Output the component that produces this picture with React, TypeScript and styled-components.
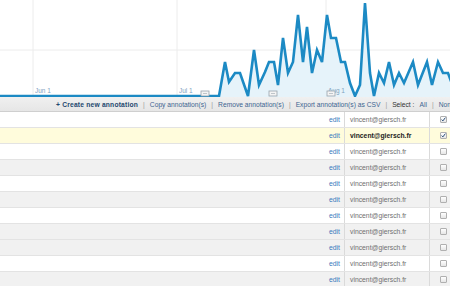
import styled, { createGlobalStyle } from 'styled-components'

const GlobalStyle = createGlobalStyle`
  html, body {
    margin: 0;
    padding: 0;
    background: #ffffff;
    overflow: hidden;
  }
`

const Page = styled.div`
  width: 450px;
  height: 286px;
  overflow: hidden;
  font-family: "Liberation Sans", Arial, sans-serif;
  background: #ffffff;
`

const Chart = styled.svg`
  display: block;
  width: 450px;
  height: 97px;
`

const Toolbar = styled.div`
  height: 15px;
  box-sizing: border-box;
  display: flex;
  align-items: center;
  gap: 5px;
  padding-left: 56px;
  background: linear-gradient(#f0f0f0, #e6e6e6);
  border-bottom: 1px solid #cfcfcf;
  white-space: nowrap;
  overflow: hidden;
  font-size: 6.7px;

  & > * {
    flex-shrink: 0;
  }
`

const ToolLink = styled.span<{ $strong?: boolean }>`
  color: ${p => (p.$strong ? '#23486e' : '#3d6591')};
  font-weight: ${p => (p.$strong ? 'bold' : 'normal')};
  letter-spacing: ${p => (p.$strong ? '0.2px' : '0')};
`

const Sep = styled.span`
  color: #9a9a9a;
`

const Label = styled.span`
  color: #333333;
`

const Row = styled.div<{ $tone: 'white' | 'yellow' | 'gray' }>`
  display: grid;
  grid-template-columns: 345px 85px 20px;
  height: 16px;
  box-sizing: border-box;
  border-bottom: 1px solid #e3e3e3;
  background: ${p =>
    p.$tone === 'yellow' ? '#fffcdc' : p.$tone === 'gray' ? '#f1f1f1' : '#ffffff'};
  font-size: 6.8px;
`

const EditCell = styled.div`
  display: flex;
  align-items: center;
  justify-content: flex-end;
  padding-right: 4px;
  border-right: 1px solid #dadada;
  color: #3b7bbd;
`

const EmailCell = styled.div<{ $active?: boolean }>`
  display: flex;
  align-items: center;
  padding-left: 5px;
  border-right: 1px solid #dadada;
  color: ${p => (p.$active ? '#222222' : '#707070')};
  font-weight: ${p => (p.$active ? 'bold' : 'normal')};
`

const CheckCell = styled.div`
  display: flex;
  align-items: center;
  padding-left: 10px;
`

const Box = styled.div`
  width: 7px;
  height: 7px;
  box-sizing: border-box;
  border: 1px solid #b0b0b0;
  border-radius: 1px;
  background: linear-gradient(#ffffff, #e6e6e6);
  display: flex;
  align-items: center;
  justify-content: center;
`

const pts: [number, number][] = [
  [0, 96], [219, 96], [225, 62], [229, 82], [235, 73], [240, 73], [248, 96],
  [254, 50], [259, 85], [265, 72], [269, 62], [274, 62], [278, 85], [283, 38],
  [288, 73], [293, 62], [298, 15], [303, 62], [307, 27], [312, 73], [317, 50],
  [322, 62], [327, 15], [331, 38], [336, 38], [341, 62], [345, 62], [350, 83],
  [355, 96], [360, 85], [365, 3], [370, 73], [374, 96], [379, 73], [384, 83],
  [389, 62], [394, 85], [399, 73], [404, 83], [413, 62], [418, 85], [427, 62],
  [432, 85], [438, 62], [443, 73], [448, 73], [452, 84]
]

const linePath = pts.map((p, i) => `${i ? 'L' : 'M'}${p[0]} ${p[1]}`).join(' ')
const areaPath = `${linePath} L452 97 L0 97 Z`

const rows: { tone: 'white' | 'yellow' | 'gray'; checked: boolean }[] = [
  { tone: 'white', checked: true },
  { tone: 'yellow', checked: true },
  { tone: 'white', checked: false },
  { tone: 'gray', checked: false },
  { tone: 'white', checked: false },
  { tone: 'gray', checked: false },
  { tone: 'white', checked: false },
  { tone: 'gray', checked: false },
  { tone: 'gray', checked: false },
  { tone: 'white', checked: false },
  { tone: 'gray', checked: false }
]

function Marker ({ x }: { x: number }) {
  return (
    <g>
      <rect x={x - 4} y={91} width={8} height={5} fill='#f4f4f4' stroke='#9aa4ad' strokeWidth={0.8} />
      <line x1={x - 2} y1={93.5} x2={x + 2} y2={93.5} stroke='#9aa4ad' strokeWidth={0.6} />
    </g>
  )
}

export default function App () {
  return (
    <Page>
      <GlobalStyle />
      <Chart viewBox='0 0 450 97'>
        <line x1={0} y1={50} x2={450} y2={50} stroke='#ececec' strokeWidth={1} />
        <line x1={33} y1={0} x2={33} y2={97} stroke='#ececec' strokeWidth={1} />
        <line x1={177} y1={0} x2={177} y2={97} stroke='#ececec' strokeWidth={1} />
        <line x1={326} y1={0} x2={326} y2={97} stroke='#ececec' strokeWidth={1} />
        <path d={areaPath} fill='#e6f3fa' />
        <path d={linePath} fill='none' stroke='#1c8ac4' strokeWidth={2.6} strokeLinejoin='miter' />
        <text x={35} y={93} fontSize={6.5} fill='#7fa3bf' fontFamily='Liberation Sans, sans-serif'>Jun 1</text>
        <text x={179} y={93} fontSize={6.5} fill='#7fa3bf' fontFamily='Liberation Sans, sans-serif'>Jul 1</text>
        <text x={328} y={93} fontSize={6.5} fill='#7fa3bf' fontFamily='Liberation Sans, sans-serif'>Aug 1</text>
        <Marker x={205} />
        <Marker x={273} />
        <Marker x={331} />
      </Chart>
      <Toolbar>
        <ToolLink $strong>+ Create new annotation</ToolLink>
        <Sep>|</Sep>
        <ToolLink>Copy annotation(s)</ToolLink>
        <Sep>|</Sep>
        <ToolLink>Remove annotation(s)</ToolLink>
        <Sep>|</Sep>
        <ToolLink>Export annotation(s) as CSV</ToolLink>
        <Sep>|</Sep>
        <Label>Select :</Label>
        <ToolLink>All</ToolLink>
        <Sep>|</Sep>
        <ToolLink>None</ToolLink>
      </Toolbar>
      {rows.map((r, i) => (
        <Row key={i} $tone={r.tone}>
          <EditCell>edit</EditCell>
          <EmailCell $active={r.tone === 'yellow'}>vincent@giersch.fr</EmailCell>
          <CheckCell>
            <Box>
              {r.checked && (
                <svg width='5' height='5' viewBox='0 0 5 5'>
                  <path d='M0.6 2.6 L1.9 3.9 L4.4 0.6' fill='none' stroke='#2b4f7a' strokeWidth={1} />
                </svg>
              )}
            </Box>
          </CheckCell>
        </Row>
      ))}
    </Page>
  )
}
